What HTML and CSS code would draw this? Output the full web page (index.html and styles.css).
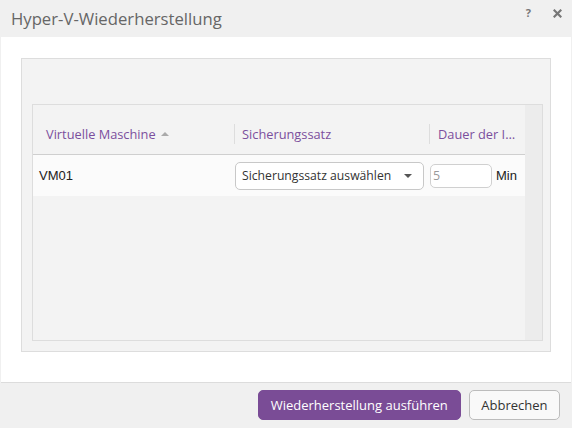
FILE: index.html
```html
<!DOCTYPE html>
<html lang="de">
<head>
    <meta charset="UTF-8" />
    <title>Hyper-V-Wiederherstellung</title>
    <link rel="stylesheet" href="styles.css">
</head>
<body>
    <div class="dialog">
        <div class="titlebar">
            <div class="title">Hyper-V-Wiederherstellung</div>
            <div class="tools">
                <span class="tool help">?</span>
                <span class="tool close">
                    <svg width="9" height="9" viewBox="0 0 9 9"><path d="M1.5 1.5 L7.5 7.5 M7.5 1.5 L1.5 7.5" stroke="#777" stroke-width="2.2" stroke-linecap="square"/></svg>
                </span>
            </div>
        </div>

        <div class="content">
            <div class="panel">
                <div class="grid">
                    <div class="grid-main">
                        <div class="grid-header">
                            <div class="th col-vm">Virtuelle Maschine <span class="sort"></span></div>
                            <div class="th col-set">Sicherungssatz</div>
                            <div class="th col-dur">Dauer der Inbetriebnahme</div>
                        </div>
                        <div class="grid-row">
                            <div class="td col-vm">VM01</div>
                            <div class="td col-set">
                                <div class="select">
                                    <span>Sicherungssatz auswählen</span>
                                    <span class="caret"></span>
                                </div>
                            </div>
                            <div class="td col-dur">
                                <div class="num-input">5</div>
                                <span class="unit">Min</span>
                            </div>
                        </div>
                    </div>
                    <div class="scrollbar"></div>
                </div>
            </div>
        </div>

        <div class="footer">
            <button class="btn btn-primary">Wiederherstellung ausführen</button>
            <button class="btn">Abbrechen</button>
        </div>
    </div>
</body>
</html>
```

FILE: styles.css
```css
body {
    margin: 0;
    background: #f0f0f0;
    font-family: "Open Sans", Arial, sans-serif;
    color: #333;
}

.dialog {
    width: 572px;
    height: 428px;
    display: flex;
    flex-direction: column;
}

.titlebar {
    height: 37px;
    display: flex;
    align-items: flex-start;
    padding-left: 11px;
    box-sizing: border-box;
}

.title {
    font-size: 16.7px;
    line-height: 24px;
    padding-top: 7px;
    color: #666;
}

.tools {
    margin-left: auto;
    display: flex;
    align-items: center;
    gap: 22px;
    padding: 6px 10px 0 0;
}

.tool {
    font-size: 11px;
    font-weight: bold;
    color: #777;
    line-height: 14px;
    display: flex;
    align-items: center;
}

.content {
    background: #fff;
    margin: 0 1px;
    height: 346px;
    box-sizing: border-box;
    padding: 21px 20px 0 20px;
    border-bottom: 1px solid #dcdcdc;
}

.panel {
    height: 294px;
    box-sizing: border-box;
    background: #f3f3f3;
    border: 1px solid #ddd;
    padding: 45px 7px 10px 10px;
}

.grid {
    height: 100%;
    box-sizing: border-box;
    border: 1px solid #ddd;
    display: flex;
    background: #f3f3f3;
}

.grid-main {
    flex: 1;
    overflow: hidden;
}

.scrollbar {
    width: 17px;
    background: #ececec;
}

.grid-header {
    height: 50px;
    box-sizing: border-box;
    display: flex;
    align-items: flex-end;
    padding-bottom: 10px;
    border-bottom: 1px solid #cfcfcf;
}

.th {
    font-size: 12.8px;
    line-height: 20px;
    color: #7b4f9d;
    white-space: nowrap;
    overflow: hidden;
    text-overflow: ellipsis;
    box-sizing: border-box;
}

.th.col-set, .th.col-dur {
    border-left: 1px solid #ddd;
}

.col-vm {
    width: 201px;
    flex: none;
    padding-left: 13px;
}

.th.col-set {
    padding-left: 7px;
}

.th.col-dur {
    padding-left: 8px;
    padding-right: 9px;
}

.col-set {
    width: 195px;
    flex: none;
    box-sizing: border-box;
}

.col-dur {
    width: 97px;
    flex: none;
}

.sort {
    display: inline-block;
    width: 0;
    height: 0;
    border-left: 4px solid transparent;
    border-right: 4px solid transparent;
    border-bottom: 4px solid #aaa;
    vertical-align: 3px;
    margin-left: 2px;
}

.grid-row {
    height: 41px;
    display: flex;
    align-items: center;
    background: #fbfbfb;
}

.td {
    font-size: 13px;
    box-sizing: border-box;
}

.td.col-vm {
    padding-left: 6px;
    color: #222;
    font-family: "Liberation Sans", Arial, sans-serif;
}

.td.col-set {
    padding-left: 1px;
}

.select {
    width: 189px;
    height: 28px;
    box-sizing: border-box;
    border: 1px solid #c8c8c8;
    border-radius: 5px;
    background: #fff;
    display: flex;
    align-items: center;
    padding: 0 11px 0 6px;
    font-size: 12.2px;
    color: #333;
}

.caret {
    margin-left: auto;
    width: 0;
    height: 0;
    border-left: 4px solid transparent;
    border-right: 4px solid transparent;
    border-top: 4px solid #555;
}

.td.col-dur {
    display: flex;
    align-items: center;
    padding-left: 1px;
    white-space: nowrap;
}

.num-input {
    width: 62px;
    height: 24px;
    box-sizing: border-box;
    border: 1px solid #d0d0d0;
    border-radius: 5px;
    background: #fff;
    color: #999;
    padding-left: 2px;
    font-size: 12.5px;
    line-height: 22px;
}

.unit {
    margin-left: 4px;
    color: #222;
    font-family: "Liberation Sans", Arial, sans-serif;
}

.footer {
    flex: 1;
    display: flex;
    justify-content: flex-end;
    align-items: flex-start;
    gap: 8px;
    padding: 7px 12px 0 0;
}

.btn {
    height: 30px;
    padding: 0 11.5px;
    font-family: "Open Sans", Arial, sans-serif;
    font-size: 13px;
    color: #333;
    background: #f9f9f9;
    border: 1px solid #bcbcbc;
    border-radius: 5px;
    cursor: pointer;
}

.btn-primary {
    background: #7a4c96;
    border-color: #7a4c96;
    color: #fff;
    padding: 0 12px;
}
```
